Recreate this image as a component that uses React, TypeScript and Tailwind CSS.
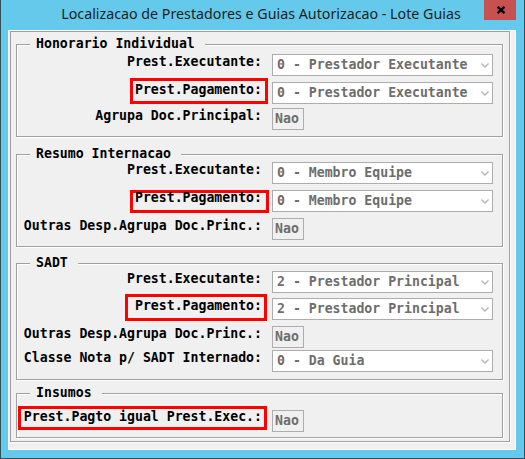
import type { ReactNode } from 'react';

const mono = "font-['DejaVu_Sans_Mono','Liberation_Mono',monospace] text-[13.2px] leading-[14px] font-bold";

function Chevron() {
  return (
    <svg width="8" height="5" viewBox="0 0 8 5" className="shrink-0">
      <polyline points="0.5,0.5 4,4 7.5,0.5" fill="none" stroke="#b4b4b4" strokeWidth="1.3" />
    </svg>
  );
}

function Select({ value }: { value: string }) {
  return (
    <div className="ml-[10px] w-[221px] h-[22px] border border-[#adadad] bg-white flex items-center pl-[4px] pr-[3px]">
      <span className={`${mono} flex-1 text-[#6d6d6d] whitespace-pre`}>{value}</span>
      <Chevron />
    </div>
  );
}

function Toggle({ value }: { value: string }) {
  return (
    <div className="ml-[10px] w-[32px] h-[22px] border border-[#adadad] bg-[#f0f0f0] flex items-center pl-[2px]">
      <span className={`${mono} text-[#6d6d6d]`}>{value}</span>
    </div>
  );
}

function Label({ children, marked }: { children: ReactNode; marked?: string }) {
  return (
    <div className="w-[245px] shrink-0 flex justify-end">
      {marked ? (
        <span className={`border-3 border-[#ff0000] ${marked}`}>
          <span className={`${mono} block text-black whitespace-pre`}>{children}</span>
        </span>
      ) : (
        <span className={`${mono} mt-[1px] text-black whitespace-pre`}>{children}</span>
      )}
    </div>
  );
}

function Row({ className, children }: { className: string; children: ReactNode }) {
  return <div className={`flex items-start ${className}`}>{children}</div>;
}

function Group({ title, className, children }: { title: string; className: string; children: ReactNode }) {
  return (
    <div
      className={`ml-[5px] mr-[6px] border border-[#a0a0a0] shadow-[inset_1px_1px_0_#fff,1px_1px_0_#fff] flex flex-col ${className}`}
    >
      <span className={`${mono} -mt-[8px] ml-[13px] self-start pl-[6px] pr-[10px] bg-[#f0f0f0] text-black`}>
        {title}
      </span>
      {children}
    </div>
  );
}

export default function App() {
  return (
    <div className="w-[525px] h-[459px] bg-[#64c9ea] border-l border-r border-b border-[#30505c] flex flex-col pl-[7px] pr-[8px]">
      {/* title bar */}
      <div className="h-[30px] flex items-start shrink-0">
        <div className="w-[32px]" />
        <div className="flex-1 text-center pt-[4px] pr-[2px] font-['Noto_Sans',sans-serif] text-[14.25px] leading-[20px] text-[#1e1e1e] whitespace-nowrap">
          Localizacao de Prestadores e Guias Autorizacao - Lote Guias
        </div>
        <div className="w-[32px] h-[20px] bg-[#c75050] flex items-center justify-center pl-[2px]">
          <svg width="10" height="8" viewBox="0 0 10 8">
            <path d="M1.5 0.8 L8.5 7.2 M8.5 0.8 L1.5 7.2" stroke="#000" strokeWidth="2.3" />
          </svg>
        </div>
      </div>

      {/* client area */}
      <div className="h-[420px] bg-[#f0f0f0] border border-white flex flex-col">
        <div className="flex-1 ml-[1px] mr-[5px] mb-[7px] border border-[#a0a0a0] shadow-[1px_1px_0_#fff] flex flex-col">
          <Group title="Honorario Individual" className="mt-[12px] pb-[6px]">
            <Row className="mt-[3px]">
              <Label>Prest.Executante:</Label>
              <Select value="0 - Prestador Executante" />
            </Row>
            <Row className="mt-[6px]">
              <Label marked="-mt-[4px] pl-[2px] pr-[3px] pt-[2px] pb-[4px] -mr-[6px]">Prest.Pagamento:</Label>
              <Select value="0 - Prestador Executante" />
            </Row>
            <Row className="mt-[4px]">
              <Label>Agrupa Doc.Principal:</Label>
              <Toggle value="Nao" />
            </Row>
          </Group>

          <Group title="Resumo Internacao" className="mt-[17px] pb-[6px]">
            <Row className="mt-[1px]">
              <Label>Prest.Executante:</Label>
              <Select value="0 - Membro Equipe" />
            </Row>
            <Row className="mt-[6px]">
              <Label marked="pl-[2px] pr-[4px] pb-[5px] -mr-[7px] -mb-[1px] [&>span]:-mt-[2px]">Prest.Pagamento:</Label>
              <Select value="0 - Membro Equipe" />
            </Row>
            <Row className="mt-[6px]">
              <Label>Outras Desp.Agrupa Doc.Princ.:</Label>
              <Toggle value="Nao" />
            </Row>
          </Group>

          <Group title="SADT" className="mt-[16px] pb-[7px]">
            <Row className="mt-[1px]">
              <Label>Prest.Executante:</Label>
              <Select value="2 - Prestador Principal" />
            </Row>
            <Row className="mt-[5px]">
              <Label marked="-mt-[4px] pl-[7px] pr-[2px] pt-[2px] pb-[5px] -mr-[5px] -mb-[1px]">Prest.Pagamento:</Label>
              <Select value="2 - Prestador Principal" />
            </Row>
            <Row className="mt-[6px]">
              <Label>Outras Desp.Agrupa Doc.Princ.:</Label>
              <Toggle value="Nao" />
            </Row>
            <Row className="mt-[2px]">
              <Label>Classe Nota p/ SADT Internado:</Label>
              <Select value="0 - Da Guia" />
            </Row>
          </Group>

          <Group title="Insumos" className="mt-[13px] pb-[5px]">
            <Row className="mt-[10px]">
              <Label marked="-mt-[4px] pl-[3px] pr-[2px] pt-[1px] pb-[3px] -mr-[5px]">Prest.Pagto igual Prest.Exec.:</Label>
              <Toggle value="Nao" />
            </Row>
          </Group>
        </div>
      </div>
    </div>
  );
}
